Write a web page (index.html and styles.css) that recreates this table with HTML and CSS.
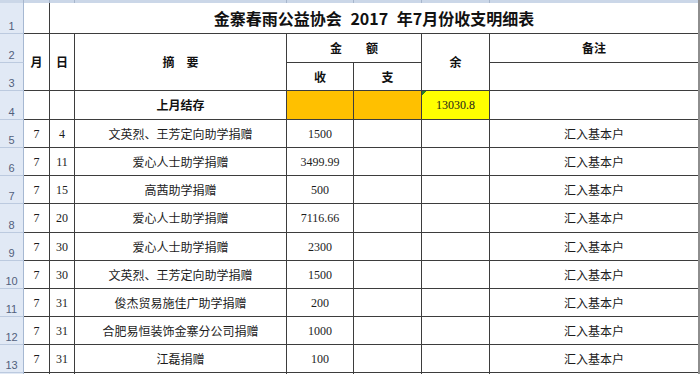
FILE: index.html
```html
<!DOCTYPE html>
<html lang="zh-CN">
<head>
<meta charset="utf-8">
<title>金寨春雨公益协会 2017 年7月份收支明细表</title>
<link rel="stylesheet" href="styles.css">
</head>
<body>
<div class="sheet">
  <div class="ch"></div><div class="ch"></div><div class="ch"></div><div class="ch"></div><div class="ch"></div><div class="ch"></div><div class="ch"></div><div class="ch last-ch"></div>

  <div class="rh">1</div>
  <div class="c"></div>
  <div class="c title last">金寨春雨公益协会 2017 年7月份收支明细表</div>

  <div class="rh">2</div>
  <div class="c hd span-r">月</div>
  <div class="c hd span-r">日</div>
  <div class="c hd span-r">摘　要</div>
  <div class="c hd span-c">金　　额</div>
  <div class="c hd span-r">余</div>
  <div class="c hd last">备注</div>

  <div class="rh">3</div>
  <div class="c hd">收</div>
  <div class="c hd">支</div>
  <div class="c last"></div>

  <div class="rh">4</div>
  <div class="c"></div>
  <div class="c"></div>
  <div class="c hd">上月结存</div>
  <div class="c orange"></div>
  <div class="c orange"></div>
  <div class="c yellow num">13030.8</div>
  <div class="c last"></div>

  <div class="rh">5</div>
  <div class="c num">7</div><div class="c num">4</div>
  <div class="c">文英烈、王芳定向助学捐赠</div>
  <div class="c num">1500</div><div class="c"></div><div class="c"></div>
  <div class="c last">汇入基本户</div>

  <div class="rh">6</div>
  <div class="c num">7</div><div class="c num">11</div>
  <div class="c">爱心人士助学捐赠</div>
  <div class="c num">3499.99</div><div class="c"></div><div class="c"></div>
  <div class="c last">汇入基本户</div>

  <div class="rh">7</div>
  <div class="c num">7</div><div class="c num">15</div>
  <div class="c">高茜助学捐赠</div>
  <div class="c num">500</div><div class="c"></div><div class="c"></div>
  <div class="c last">汇入基本户</div>

  <div class="rh">8</div>
  <div class="c num">7</div><div class="c num">20</div>
  <div class="c">爱心人士助学捐赠</div>
  <div class="c num">7116.66</div><div class="c"></div><div class="c"></div>
  <div class="c last">汇入基本户</div>

  <div class="rh">9</div>
  <div class="c num">7</div><div class="c num">30</div>
  <div class="c">爱心人士助学捐赠</div>
  <div class="c num">2300</div><div class="c"></div><div class="c"></div>
  <div class="c last">汇入基本户</div>

  <div class="rh">10</div>
  <div class="c num">7</div><div class="c num">30</div>
  <div class="c">文英烈、王芳定向助学捐赠</div>
  <div class="c num">1500</div><div class="c"></div><div class="c"></div>
  <div class="c last">汇入基本户</div>

  <div class="rh">11</div>
  <div class="c num">7</div><div class="c num">31</div>
  <div class="c">俊杰贸易施佳广助学捐赠</div>
  <div class="c num">200</div><div class="c"></div><div class="c"></div>
  <div class="c last">汇入基本户</div>

  <div class="rh">12</div>
  <div class="c num">7</div><div class="c num">31</div>
  <div class="c">合肥易恒装饰金寨分公司捐赠</div>
  <div class="c num">1000</div><div class="c"></div><div class="c"></div>
  <div class="c last">汇入基本户</div>

  <div class="rh">13</div>
  <div class="c num">7</div><div class="c num">31</div>
  <div class="c">江磊捐赠</div>
  <div class="c num">100</div><div class="c"></div><div class="c"></div>
  <div class="c last">汇入基本户</div>

  <div class="rh"></div>
  <div class="c plain"></div><div class="c plain"></div><div class="c plain"></div><div class="c plain"></div><div class="c plain"></div><div class="c plain"></div><div class="c plain last"></div>
</div>
</body>
</html>
```

FILE: styles.css
```css
html, body {
  margin: 0;
  padding: 0;
  background: #ffffff;
}

body {
  width: 700px;
  height: 374px;
  overflow: hidden;
  font-family: "Noto Sans CJK SC", "Noto Sans", sans-serif;
  color: #1c1c1c;
}

.sheet {
  display: grid;
  grid-template-columns: 24px 26px 25px 212px 67px 68px 68px 208px;
  grid-template-rows: 3px 31px 29px 28px 29px 28px 28px 28px 29px 28px 28px 28px 28px 28px 28px;
  border-right: 2px solid #8e8e8e;
}

.ch {
  background: #cbd7e8;
  border-right: 1px solid #a7b6cc;
}

.ch.last-ch {
  border-right: none;
}

.rh {
  box-sizing: border-box;
  background: #e1e9f5;
  border-right: 1px solid #a6b8d2;
  border-bottom: 1px solid #bccadf;
  display: flex;
  align-items: flex-end;
  justify-content: center;
  padding-bottom: 1px;
  font-family: "Liberation Sans", Arial, sans-serif;
  font-size: 11px;
  line-height: 12px;
  color: #51607c;
}

.c {
  box-sizing: border-box;
  border-right: 1px solid #3d3d3d;
  border-bottom: 1px solid #3d3d3d;
  display: flex;
  align-items: center;
  justify-content: center;
  font-size: 12px;
  line-height: 1;
  white-space: nowrap;
}

.c.plain {
  border-bottom: none;
}

.c.last {
  border-right: none;
}

.title {
  grid-column: span 6;
  font-size: 16px;
  font-weight: 700;
  word-spacing: 5px;
  color: #111111;
  padding-bottom: 1px;
}

.hd {
  font-weight: 700;
  color: #111111;
}

.span-r {
  grid-row: span 2;
}

.span-c {
  grid-column: span 2;
}

.num {
  font-family: "Liberation Serif", "Times New Roman", serif;
  font-size: 12px;
}

.orange {
  background: #ffc000;
}

.yellow {
  background: linear-gradient(135deg, #2a7f2a 0, #2a7f2a 3px, #ffff00 3px);
}
```
